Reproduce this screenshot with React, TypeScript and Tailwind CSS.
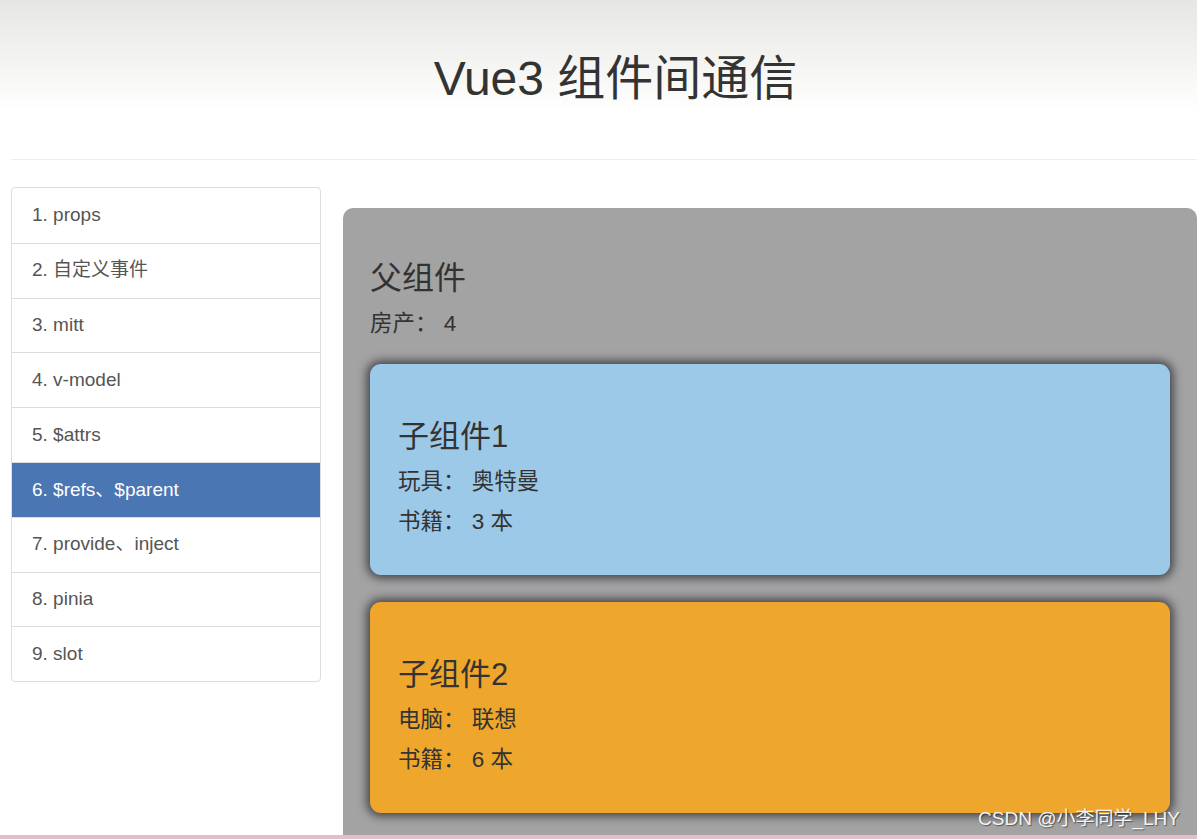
const menuItems = [
  "1. props",
  "2. 自定义事件",
  "3. mitt",
  "4. v-model",
  "5. $attrs",
  "6. $refs、$parent",
  "7. provide、inject",
  "8. pinia",
  "9. slot",
];

const font = "font-['Liberation_Sans','Noto_Sans_CJK_SC',sans-serif]";

const ChildCard = ({
  title,
  lines,
  color,
}: {
  title: string;
  lines: string[];
  color: string;
}) => (
  <div
    className={`rounded-[11px] ${color} px-[28px] pt-[27px] pb-[28px] shadow-[0_0_10px_3px_rgba(30,30,40,0.75)]`}
  >
    <h2 className="mt-[28px] mb-[13px] text-[31px] leading-[35px] text-[#333]">{title}</h2>
    {lines.map((line) => (
      <p key={line} className="mb-[10px] text-[22.5px] leading-[30px] text-[#333]">
        {line}
      </p>
    ))}
  </div>
);

export default function App() {
  return (
    <div className={`relative h-[839px] overflow-hidden bg-white ${font}`}>
      <header className="h-[159px] bg-gradient-to-b from-[#e6e6e3] to-white to-70% pt-[52px]">
        <h1 className="flex justify-center pl-[34px] text-[48px] leading-[53px] text-[#333]">
          Vue3 组件间通信
        </h1>
      </header>
      <div className="ml-[11px] border-t border-[#eeeeee]" />

      <div className="flex items-start gap-[22px] pl-[11px] pt-[27px]">
        <ul className="w-[310px] shrink-0 overflow-hidden rounded-[4px] border border-[#dddddd]">
          {menuItems.map((item, i) => (
            <li
              key={item}
              className={`flex h-[54.8px] items-center px-[20px] text-[19px] ${
                i > 0 ? "border-t border-[#dddddd]" : ""
              } ${i === 5 ? "bg-[#4a76b3] text-white" : "text-[#555]"}`}
            >
              {item}
            </li>
          ))}
        </ul>

        <section className="mt-[21px] flex-1 rounded-[10px] bg-[#a3a3a3] px-[27px] pt-[27px] pb-[60px]">
          <h2 className="mt-[26px] mb-[13px] text-[32px] leading-[35px] text-[#333]">父组件</h2>
          <p className="text-[22.5px] leading-[30px] text-[#333]">房产： 4</p>
          <div className="mt-[25px] flex flex-col gap-[27px]">
            <ChildCard title="子组件1" lines={["玩具： 奥特曼", "书籍： 3 本"]} color="bg-[#9dc9e8]" />
            <ChildCard title="子组件2" lines={["电脑： 联想", "书籍： 6 本"]} color="bg-[#eea72c]" />
          </div>
        </section>
      </div>

      <div className="absolute right-[17px] bottom-[8px] text-[19px] leading-[24px] text-[#f4f4f4] [text-shadow:1px_1px_1px_rgba(0,0,0,0.45)]">
        CSDN @小李同学_LHY
      </div>
      <div className="absolute bottom-0 left-0 h-[4px] w-full bg-[#e4bccb]" />
    </div>
  );
}
